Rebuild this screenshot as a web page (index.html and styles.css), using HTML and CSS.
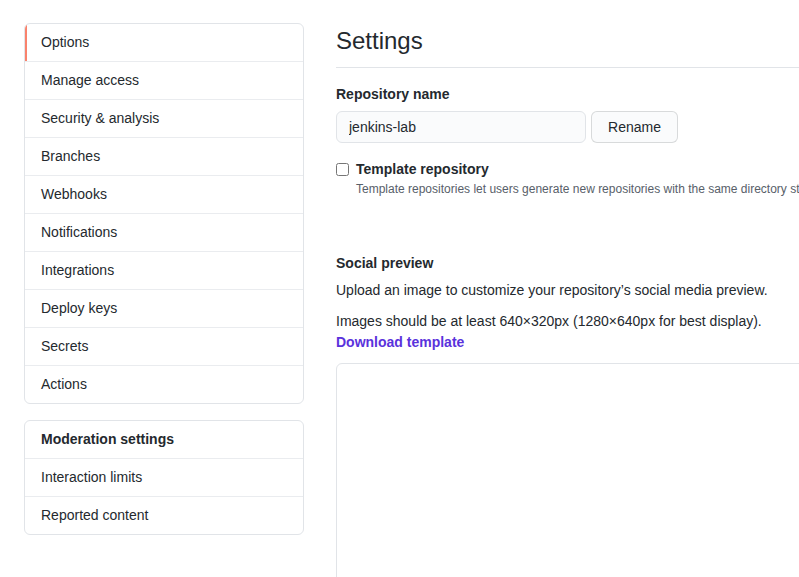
FILE: index.html
```html
<!DOCTYPE html>
<html>
<head>
<meta charset="utf-8">
<link rel="stylesheet" href="styles.css">
</head>
<body>
<div class="layout">
  <aside class="sidebar">
    <nav class="menu">
      <a class="menu-item selected">Options</a>
      <a class="menu-item">Manage access</a>
      <a class="menu-item">Security &amp; analysis</a>
      <a class="menu-item">Branches</a>
      <a class="menu-item">Webhooks</a>
      <a class="menu-item">Notifications</a>
      <a class="menu-item">Integrations</a>
      <a class="menu-item">Deploy keys</a>
      <a class="menu-item">Secrets</a>
      <a class="menu-item">Actions</a>
    </nav>
    <nav class="menu">
      <div class="menu-heading">Moderation settings</div>
      <a class="menu-item">Interaction limits</a>
      <a class="menu-item">Reported content</a>
    </nav>
  </aside>
  <main class="main">
    <div class="subhead"><h2 class="subhead-title">Settings</h2></div>
    <div class="form-group">
      <label class="label">Repository name</label>
      <div class="name-row">
        <input class="input" type="text" value="jenkins-lab">
        <button class="btn">Rename</button>
      </div>
    </div>
    <div class="checkbox-row">
      <input class="checkbox" type="checkbox">
      <div class="checkbox-text">
        <label class="label">Template repository</label>
        <p class="note">Template repositories let users generate new repositories with the same directory structure and files.</p>
      </div>
    </div>
    <section class="social">
      <h3 class="label">Social preview</h3>
      <p class="para">Upload an image to customize your repository’s social media preview.</p>
      <p class="para tight">Images should be at least 640×320px (1280×640px for best display).</p>
      <a class="link">Download template</a>
      <div class="preview-box"></div>
    </section>
  </main>
</div>
</body>
</html>
```
FILE: styles.css
```css
html, body {
  margin: 0;
  padding: 0;
  overflow: hidden;
  background: #fff;
}
body {
  font-family: "Liberation Sans", Arial, sans-serif;
  font-size: 14px;
  line-height: 1.5;
  color: #24292e;
}
.layout {
  display: flex;
  gap: 32px;
  padding: 23px 0 0 24px;
  width: 1100px;
}
.sidebar {
  width: 280px;
  flex: none;
  display: flex;
  flex-direction: column;
  gap: 16px;
}
.menu {
  border: 1px solid #e1e4e8;
  border-radius: 6px;
  background: #fff;
  display: flex;
  flex-direction: column;
  overflow: hidden;
}
.menu-item, .menu-heading {
  display: block;
  padding: 8px 16px;
  border-top: 1px solid #eaecef;
  color: #24292e;
}
.menu-item:first-child, .menu-heading:first-child {
  border-top: 0;
}
.menu-heading {
  font-weight: bold;
}
.menu-item.selected {
  border-left: 2px solid #f9826c;
  padding-left: 14px;
}
.main {
  width: 760px;
  flex: none;
}
.subhead {
  border-bottom: 1px solid #e1e4e8;
  padding-bottom: 8px;
  margin-bottom: 16px;
}
.subhead-title {
  margin: 0;
  font-size: 24px;
  font-weight: normal;
  line-height: 36px;
}
.label {
  display: block;
  font-weight: bold;
  font-size: 14px;
  margin: 0;
}
.form-group .label {
  margin-bottom: 6px;
}
.name-row {
  display: flex;
  gap: 5px;
}
.input {
  box-sizing: border-box;
  width: 250px;
  height: 32px;
  padding: 5px 12px;
  font: inherit;
  color: #24292e;
  background: #fafbfc;
  border: 1px solid #e1e4e8;
  border-radius: 6px;
}
.btn {
  box-sizing: border-box;
  height: 32px;
  padding: 5px 16px;
  width: 87px;
  font: inherit;
  color: #24292e;
  background: #fafbfc;
  border: 1px solid rgba(27, 31, 35, 0.15);
  border-radius: 6px;
}
.checkbox-row {
  display: flex;
  gap: 7px;
  margin-top: 16px;
}
.checkbox {
  margin: 4px 0 0 0;
  width: 13px;
  height: 13px;
}
.note {
  margin: 0;
  font-size: 12px;
  line-height: 18px;
  color: #586069;
  white-space: nowrap;
}
.social {
  margin-top: 55px;
}
.social .label {
  margin-bottom: 6px;
}
.para {
  margin: 0 0 10px 0;
}
.para.tight {
  margin-bottom: 0;
}
.link {
  display: block;
  font-weight: bold;
  color: #5a32dc;
}
.preview-box {
  margin-top: 10px;
  height: 400px;
  border: 1px solid #e1e4e8;
  border-radius: 6px;
}
```
